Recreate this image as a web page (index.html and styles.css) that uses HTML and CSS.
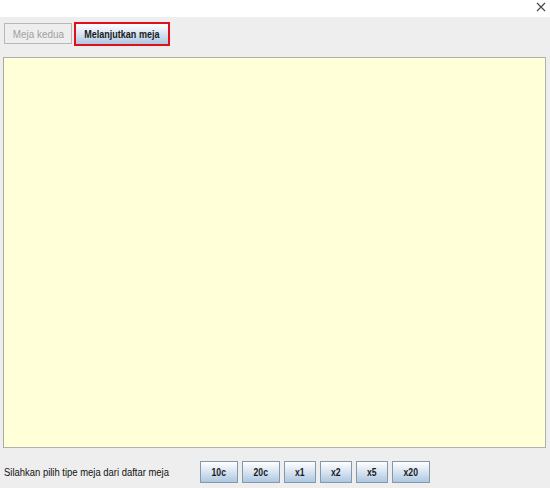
FILE: index.html
```html
<!DOCTYPE html>
<html>
<head>
<meta charset="utf-8">
<link rel="stylesheet" href="styles.css">
</head>
<body>
<div class="window">
  <div class="titlebar">
    <svg class="close" width="10" height="10" viewBox="0 0 10 10"><path d="M1 1 L9 9 M9 1 L1 9" stroke="#444" stroke-width="1.1" fill="none"/></svg>
  </div>
  <div class="content">
    <div class="tabs">
      <div class="btn tab disabled"><span class="lbl">Meja kedua</span></div>
      <div class="btn tab active"><span class="lbl">Melanjutkan meja</span></div>
    </div>
    <div class="panel"></div>
    <div class="footer">
      <div class="hint"><span class="hint-lbl">Silahkan pilih tipe meja dari daftar meja</span></div>
      <div class="actions">
        <div class="btn small w38"><span class="lbl">10c</span></div>
        <div class="btn small w38"><span class="lbl">20c</span></div>
        <div class="btn small w32"><span class="lbl">x1</span></div>
        <div class="btn small w32"><span class="lbl">x2</span></div>
        <div class="btn small w32"><span class="lbl">x5</span></div>
        <div class="btn small w38"><span class="lbl">x20</span></div>
      </div>
    </div>
  </div>
</div>
</body>
</html>
```
FILE: styles.css
```css
html, body {
  margin: 0;
  padding: 0;
}
body {
  width: 550px;
  height: 488px;
  background: #eeeeee;
  font-family: "Liberation Sans", Arial, sans-serif;
  overflow: hidden;
}
.window {
  display: flex;
  flex-direction: column;
  height: 488px;
}
.titlebar {
  height: 17px;
  background: #ffffff;
  display: flex;
  justify-content: flex-end;
  align-items: flex-start;
}
.close {
  margin: 2px 4px 0 0;
}
.content {
  flex: 1;
  display: flex;
  flex-direction: column;
  padding: 0 4px 0 3px;
}
.tabs {
  display: flex;
  gap: 2px;
  padding: 5px 0 0 1px;
  height: 40px;
  box-sizing: border-box;
  align-items: flex-start;
}
.btn {
  box-sizing: border-box;
  display: flex;
  align-items: center;
  justify-content: center;
  font-size: 11px;
  font-weight: bold;
  color: #1a1a1a;
  border: 1px solid #7a8a99;
  background: linear-gradient(#ffffff 0%, #dfe9f4 40%, #aec8e1 100%);
  white-space: nowrap;
}
.lbl {
  display: inline-block;
  transform: scaleX(0.82);
}
.tab {
  height: 21px;
  margin-top: 1px;
}
.tab.disabled {
  width: 68px;
  background: #eeeeee;
  border-color: #b8b8b8;
  color: #a0a0a0;
  font-weight: normal;
}
.tab.disabled .lbl {
  transform: scaleX(0.9);
}
.tab.active {
  width: 96px;
  height: 24px;
  margin-top: 0;
  border: 2px solid #e0101a;
}
.panel {
  height: 391px;
  box-sizing: border-box;
  border: 1px solid #b0b0b0;
  border-left-color: #a8a8a8;
  background: #ffffd8;
}
.footer {
  display: flex;
  align-items: center;
  height: 40px;
  padding: 0 0 0 1px;
  box-sizing: border-box;
}
.hint {
  font-size: 10.5px;
  color: #111;
  width: 196px;
  margin-top: 8px;
}
.hint-lbl {
  display: inline-block;
  transform: scaleX(0.9);
  transform-origin: left center;
}
.actions {
  display: flex;
  gap: 4px;
  margin-top: 8px;
}
.small {
  height: 22px;
  font-size: 10.5px;
  border-color: #8398ad;
}
.w38 { width: 38px; }
.w32 { width: 32px; }
```
